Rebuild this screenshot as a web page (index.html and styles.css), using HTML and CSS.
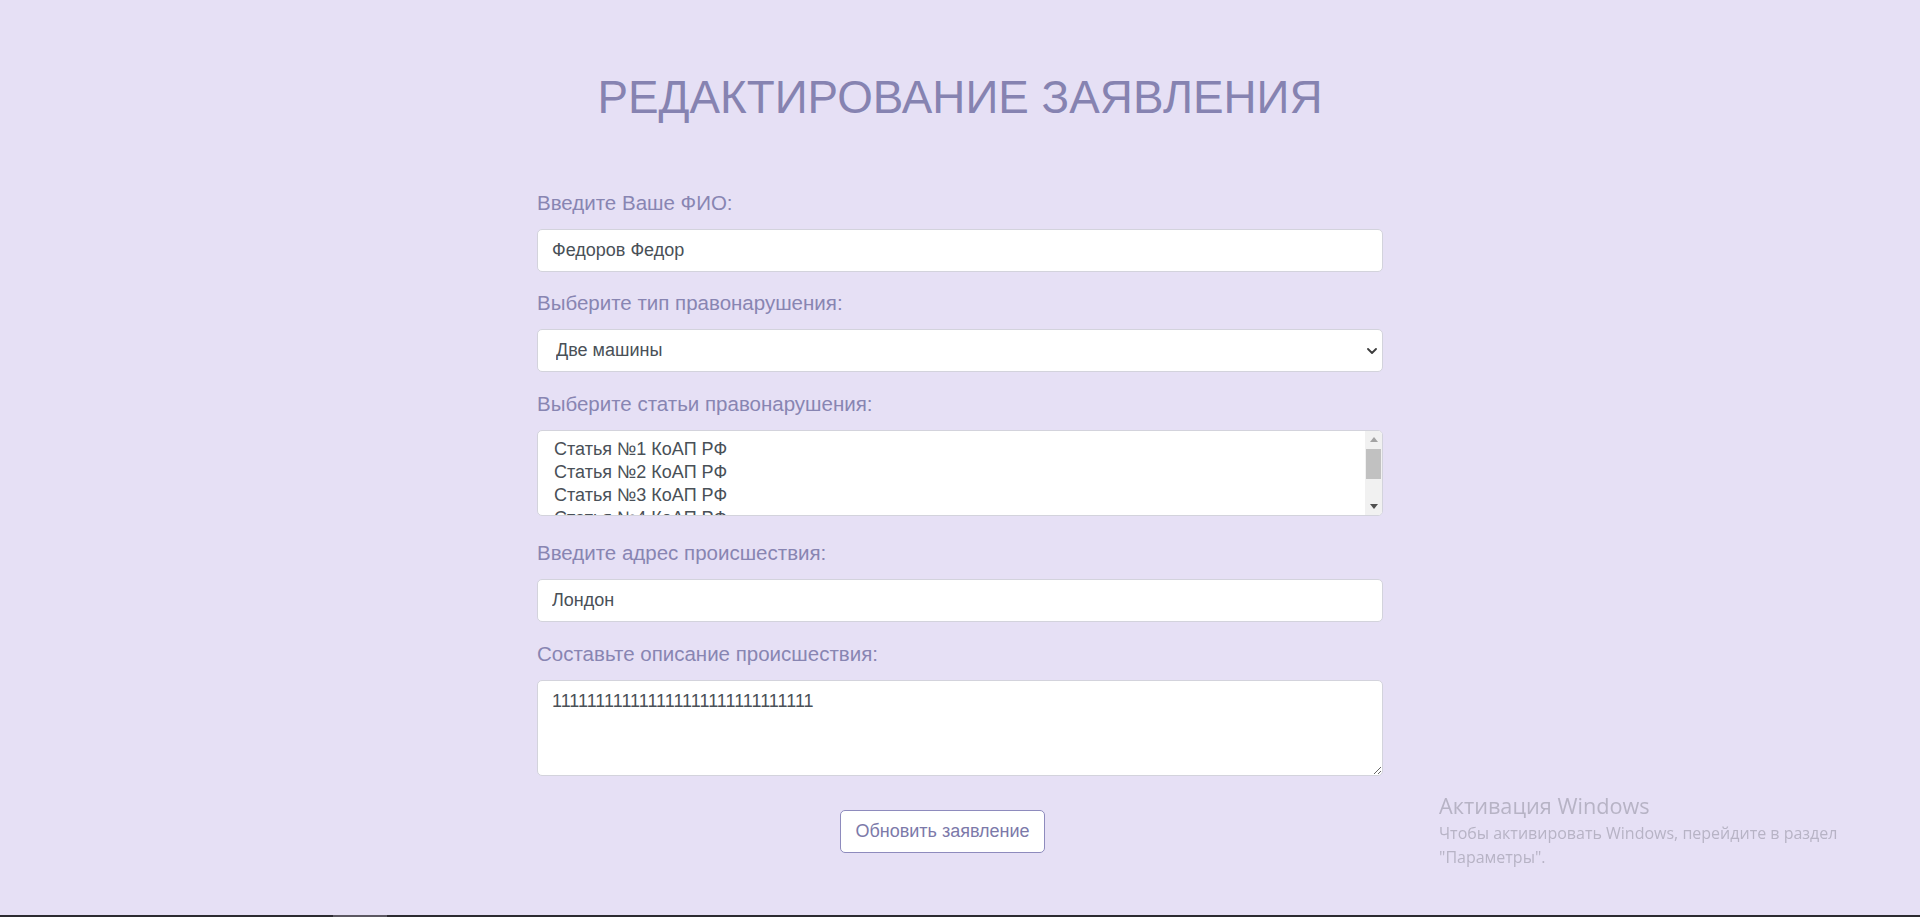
FILE: index.html
```html
<!DOCTYPE html>
<html lang="ru">
<head>
<meta charset="utf-8">
<title>Редактирование заявления</title>
<link rel="stylesheet" href="styles.css">
</head>
<body>
<div class="page">
  <h1 class="title">РЕДАКТИРОВАНИЕ ЗАЯВЛЕНИЯ</h1>
  <form class="form">
    <div class="group">
      <label class="label" for="fio">Введите Ваше ФИО:</label>
      <input class="control" id="fio" type="text" value="Федоров Федор">
    </div>
    <div class="group">
      <label class="label" for="type">Выберите тип правонарушения:</label>
      <div class="select-wrap">
        <select class="control select" id="type">
          <option>Две машины</option>
          <option>Машина и пешеход</option>
        </select>
        <svg class="chevron" width="10" height="6" viewBox="0 0 10 6" aria-hidden="true"><path d="M1 1 L5 5 L9 1" fill="none" stroke="#3c3c3c" stroke-width="1.8" stroke-linecap="round" stroke-linejoin="round"/></svg>
      </div>
    </div>
    <div class="group group-list">
      <div class="label" id="articles-label">Выберите статьи правонарушения:</div>
      <div class="listbox" role="listbox" aria-multiselectable="true" aria-labelledby="articles-label">
        <div class="listbox-items">
          <div class="option" role="option">Статья №1 КоАП РФ</div>
          <div class="option" role="option">Статья №2 КоАП РФ</div>
          <div class="option" role="option">Статья №3 КоАП РФ</div>
          <div class="option" role="option">Статья №4 КоАП РФ</div>
          <div class="option" role="option">Статья №5 КоАП РФ</div>
        </div>
        <div class="scrollbar" aria-hidden="true">
          <div class="sb-btn"><span class="arrow-up"></span></div>
          <div class="sb-track"><div class="sb-thumb"></div></div>
          <div class="sb-btn"><span class="arrow-down"></span></div>
        </div>
      </div>
    </div>
    <div class="group">
      <label class="label" for="addr">Введите адрес происшествия:</label>
      <input class="control" id="addr" type="text" value="Лондон">
    </div>
    <div class="group group-last">
      <label class="label" for="desc">Составьте описание происшествия:</label>
      <textarea class="control textarea" id="desc" rows="3">111111111111111111111111111111</textarea>
    </div>
    <div class="actions">
      <button class="btn" type="button">Обновить заявление</button>
    </div>
  </form>
</div>
<div class="watermark">
  <div class="wm-title">Активация Windows</div>
  <div class="wm-text">Чтобы активировать Windows, перейдите в раздел<br>"Параметры".</div>
</div>
<div class="bottom-edge"><span class="bottom-thumb"></span></div>
</body>
</html>
```
FILE: styles.css
```css
html, body {
  margin: 0;
  padding: 0;
}
body {
  background: #e6e0f5;
  min-height: 100vh;
  font-family: "Liberation Sans", Arial, sans-serif;
  overflow: hidden;
}
.page {
  padding-top: 71px;
}
.title {
  margin: 0 0 62.5px;
  text-align: center;
  font-size: 45.8px;
  line-height: 54px;
  font-weight: normal;
  color: #8683b1;
}
.form {
  width: 846px;
  margin: 0 auto;
}
.group {
  margin-bottom: 16.5px;
}
.group-list {
  margin-bottom: 22.5px;
}
.group-last {
  margin-bottom: 34.5px;
}
.label {
  display: block;
  font-size: 20.5px;
  line-height: 30px;
  margin-bottom: 11px;
  color: #8885b2;
}
.control {
  display: block;
  box-sizing: border-box;
  width: 100%;
  height: 43px;
  margin: 0;
  padding: 7px 14px;
  font-family: "Liberation Sans", Arial, sans-serif;
  font-size: 18px;
  line-height: 27px;
  color: #495057;
  background: #fff;
  border: 1px solid #d3d3dc;
  border-radius: 5px;
  outline: none;
}
.select-wrap {
  position: relative;
}
.select {
  appearance: none;
  -webkit-appearance: none;
  padding-left: 18px;
}
.chevron {
  position: absolute;
  right: 6px;
  top: 19px;
  pointer-events: none;
}
.listbox {
  box-sizing: border-box;
  display: flex;
  height: 86px;
  background: #fff;
  border: 1px solid #d3d3dc;
  border-radius: 5px;
  overflow: hidden;
}
.listbox-items {
  flex: 1;
  padding: 7.5px 0 0 16px;
  overflow: hidden;
}
.option {
  font-size: 18px;
  line-height: 23px;
  color: #495057;
  white-space: nowrap;
}
.scrollbar {
  display: flex;
  flex-direction: column;
  width: 17px;
  background: #f1f1f1;
}
.sb-btn {
  height: 17px;
  display: flex;
  align-items: center;
  justify-content: center;
  flex: none;
}
.arrow-up {
  width: 0;
  height: 0;
  border-left: 4.5px solid transparent;
  border-right: 4.5px solid transparent;
  border-bottom: 5px solid #a3a3a3;
}
.arrow-down {
  width: 0;
  height: 0;
  border-left: 4.5px solid transparent;
  border-right: 4.5px solid transparent;
  border-top: 5px solid #505050;
}
.sb-track {
  flex: 1;
  padding: 1px 1px 0;
}
.sb-thumb {
  height: 30px;
  background: #c1c1c1;
}
.textarea {
  height: 96px;
  resize: vertical;
}
.actions {
  display: flex;
  justify-content: center;
  padding-right: 35px;
}
.btn {
  box-sizing: border-box;
  height: 43px;
  padding: 7px 14px;
  font-family: "Liberation Sans", Arial, sans-serif;
  font-size: 18px;
  line-height: 27px;
  color: #7c79a9;
  background: #fff;
  border: 1px solid #8e8bbd;
  border-radius: 5px;
  cursor: pointer;
}
.watermark {
  position: fixed;
  left: 1439px;
  top: 791px;
  font-family: "Open Sans", "Noto Sans", sans-serif;
  color: #b7b3c5;
  white-space: nowrap;
}
.wm-title {
  font-size: 21.7px;
  line-height: 30px;
}
.wm-text {
  font-size: 16px;
  line-height: 24px;
}
.bottom-edge {
  position: fixed;
  left: 0;
  right: 0;
  bottom: 0;
  height: 2px;
  background: #2c2b31;
}
.bottom-thumb {
  position: absolute;
  left: 333px;
  top: 0;
  width: 54px;
  height: 2px;
  background: #5c5862;
}
```
